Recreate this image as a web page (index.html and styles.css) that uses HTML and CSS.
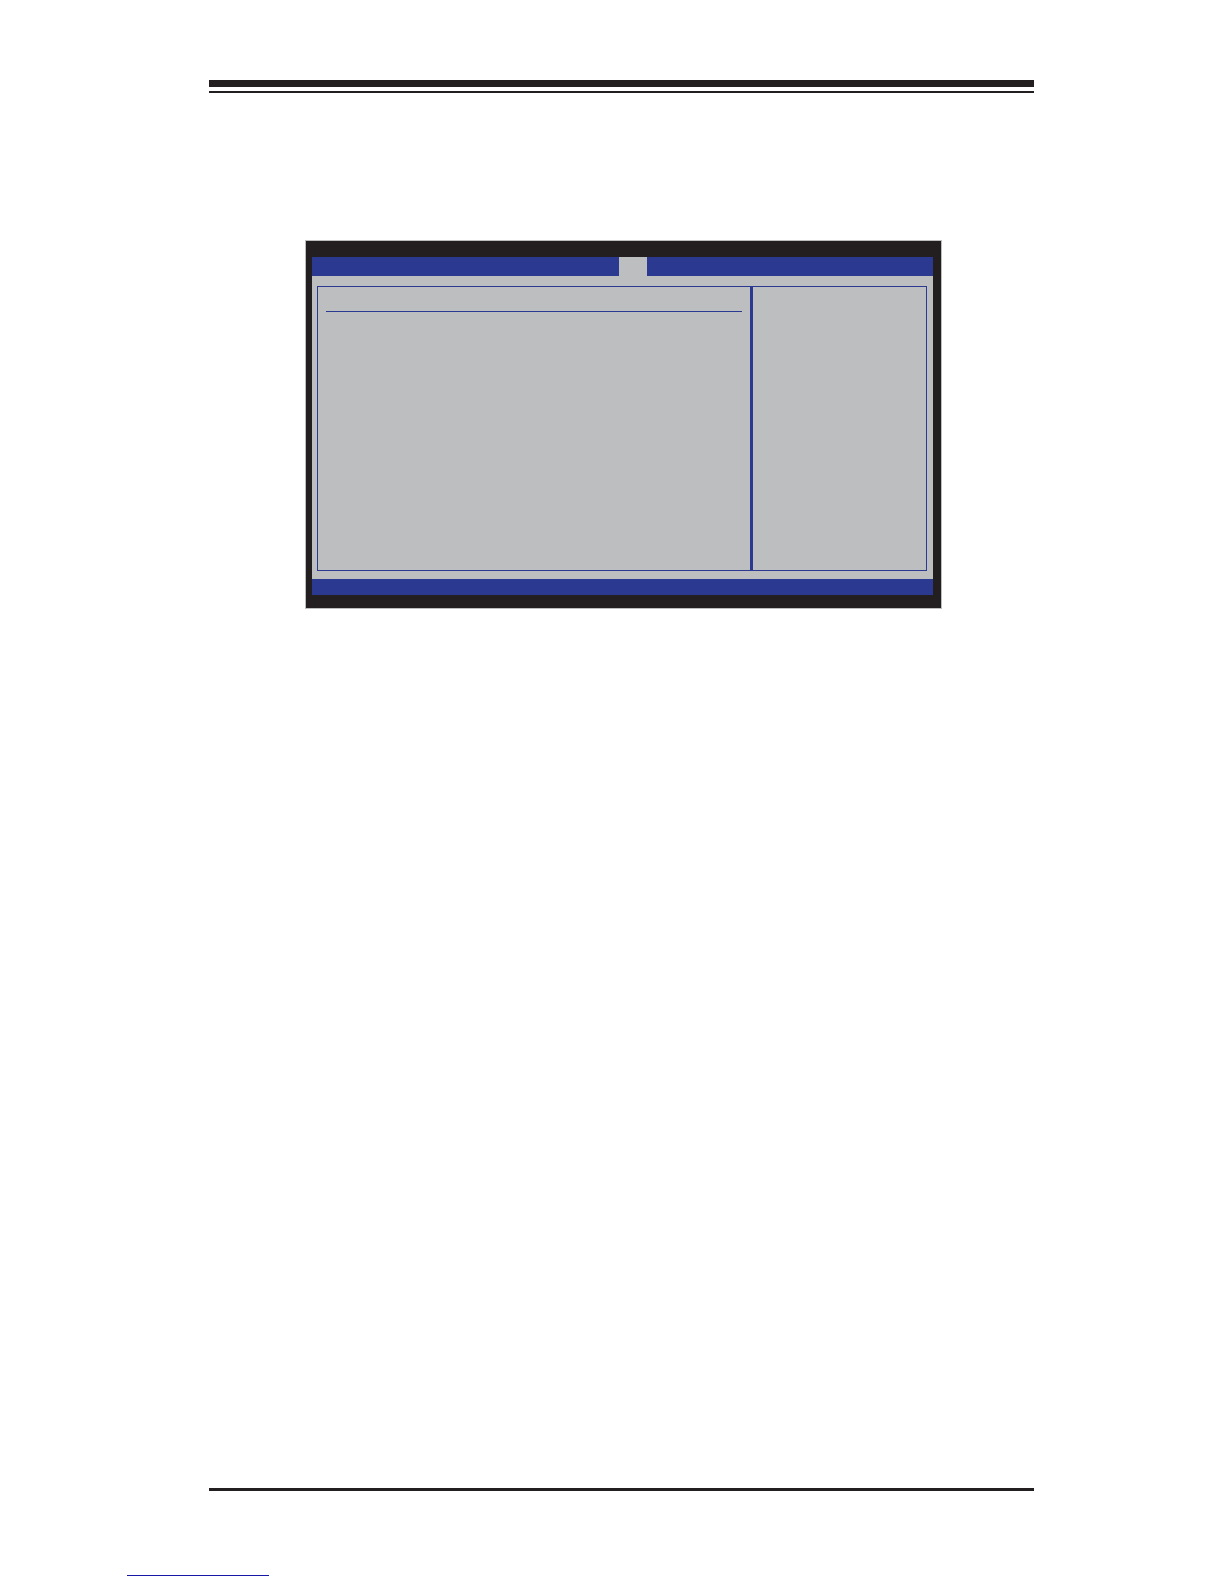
FILE: index.html
```html
<!DOCTYPE html>
<html lang="en">
<head>
<meta charset="utf-8">
<title>Setup Utility</title>
<link rel="stylesheet" href="styles.css">
</head>
<body>
<div class="wrapper">
    <header class="pageHeader"></header>
    <main class="content">
        <div class="bios">
            <div class="biosScreen">
                <div class="menuBar">
                    <div class="activeTab"></div>
                </div>
                <div class="biosBody">
                    <section class="settings">
                        <hr class="settingsLine">
                    </section>
                    <aside class="help"></aside>
                </div>
                <div class="statusBar"></div>
            </div>
        </div>
    </main>
    <footer class="pageFooter"></footer>
</div>
<div class="bottomLink">
    <a href="#" aria-label="Home"></a>
</div>
</body>
</html>
```

FILE: styles.css
```css
* {
    box-sizing: border-box;
}
body {
    background-color: #FFF;
    display: flex;
    flex-direction: column;
    font: 14px "Liberation Sans", Arial, sans-serif;
    margin: 0;
    min-height: 100vh;
}
.wrapper {
    display: flex;
    flex: 1;
    flex-direction: column;
    padding: 80px 190px 0 209px;
}
.pageHeader {
    border-top: 7px solid #231F20;
    border-bottom: 2px solid #231F20;
    height: 13px;
}
.content {
    flex: 1;
    padding: 147px 92px 0 96px;
}
.bios {
    background-color: #231F20;
    border: 1px solid #BCBEC0;
    padding: 16px 8px 13px 6px;
}
.biosScreen {
    background-color: #BCBEC0;
}
.menuBar {
    background-color: #2B3990;
    display: grid;
    grid-template-columns: 307fr 28px 286fr;
    height: 19px;
}
.activeTab {
    background-color: #BCBEC0;
    grid-column: 2;
}
.biosBody {
    border: 1px solid #2B3990;
    display: grid;
    grid-template-columns: 435fr 173fr;
    margin: 10px 6px 8px 5px;
    min-height: 285px;
}
.settings {
    border-right: 3px solid #2B3990;
    padding: 24px 8px 0;
}
.settingsLine {
    border: 0;
    border-top: 1px solid #2B3990;
    margin: 0;
}
.statusBar {
    background-color: #2B3990;
    height: 16px;
}
.pageFooter {
    border-top: 3px solid #231F20;
}
/* link strip at the foot of the page */
.bottomLink {
    display: flex;
    height: 93px;
    padding: 0 127px 8px;
}
.bottomLink a {
    align-self: flex-end;
    border-bottom: 1px solid #1818A8;
    height: 20px;
    width: 142px;
}
```
